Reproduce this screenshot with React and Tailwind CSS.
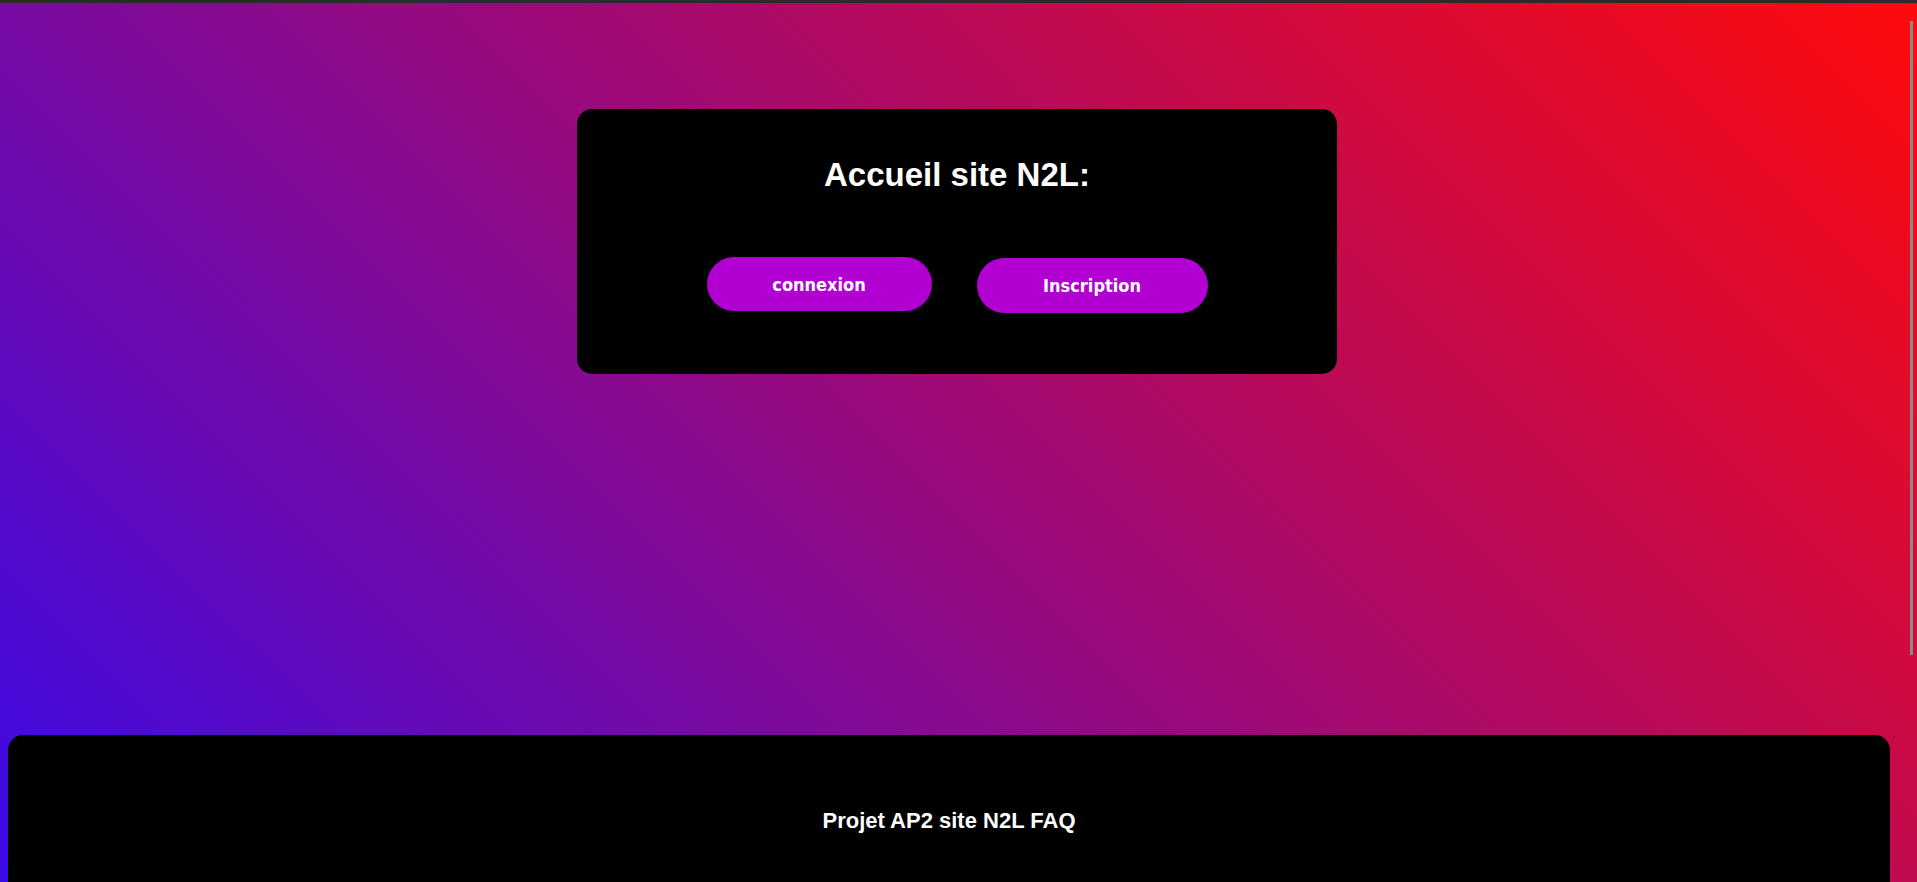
import React from 'react';

const Home = () => {
  return (
    <div className="relative h-[882px] overflow-hidden border-t-[3px] border-[#2b2b2b] pr-[3px] bg-[linear-gradient(45deg,#3a0ae8,#ff0a0a)] font-['Liberation_Sans',Arial,sans-serif] text-white">
      {/* Main card */}
      <div className="mx-auto mt-[106px] w-[760px] h-[265px] rounded-[15px] bg-black pt-[47px] text-center">
        <h1 className="text-[33px] font-bold leading-[38px]">Accueil site N2L:</h1>
        <div className="mt-[63px] flex items-start justify-center gap-[45px] font-['DejaVu_Sans_Condensed','DejaVu_Sans',Tahoma,sans-serif] font-stretch-condensed">
          <button className="h-[54px] w-[225px] rounded-full bg-[#b200d2] text-[18px] font-bold text-white">
            connexion
          </button>
          <button className="mt-px h-[55px] w-[231px] rounded-full bg-[#b200d2] text-[18px] font-bold text-white">
            Inscription
          </button>
        </div>
      </div>

      {/* Footer */}
      <footer className="mt-[361px] ml-[8px] mr-[24px] h-[300px] rounded-t-[15px] bg-black pt-[73px] text-center">
        <p className="text-[22px] font-bold leading-[25px]">Projet AP2 site N2L FAQ</p>
      </footer>

      {/* Scrollbar thumb */}
      <div className="absolute right-[4px] top-[18px] h-[634px] w-[3px] bg-[#8a8a8a]" />
    </div>
  );
};

export default Home;
